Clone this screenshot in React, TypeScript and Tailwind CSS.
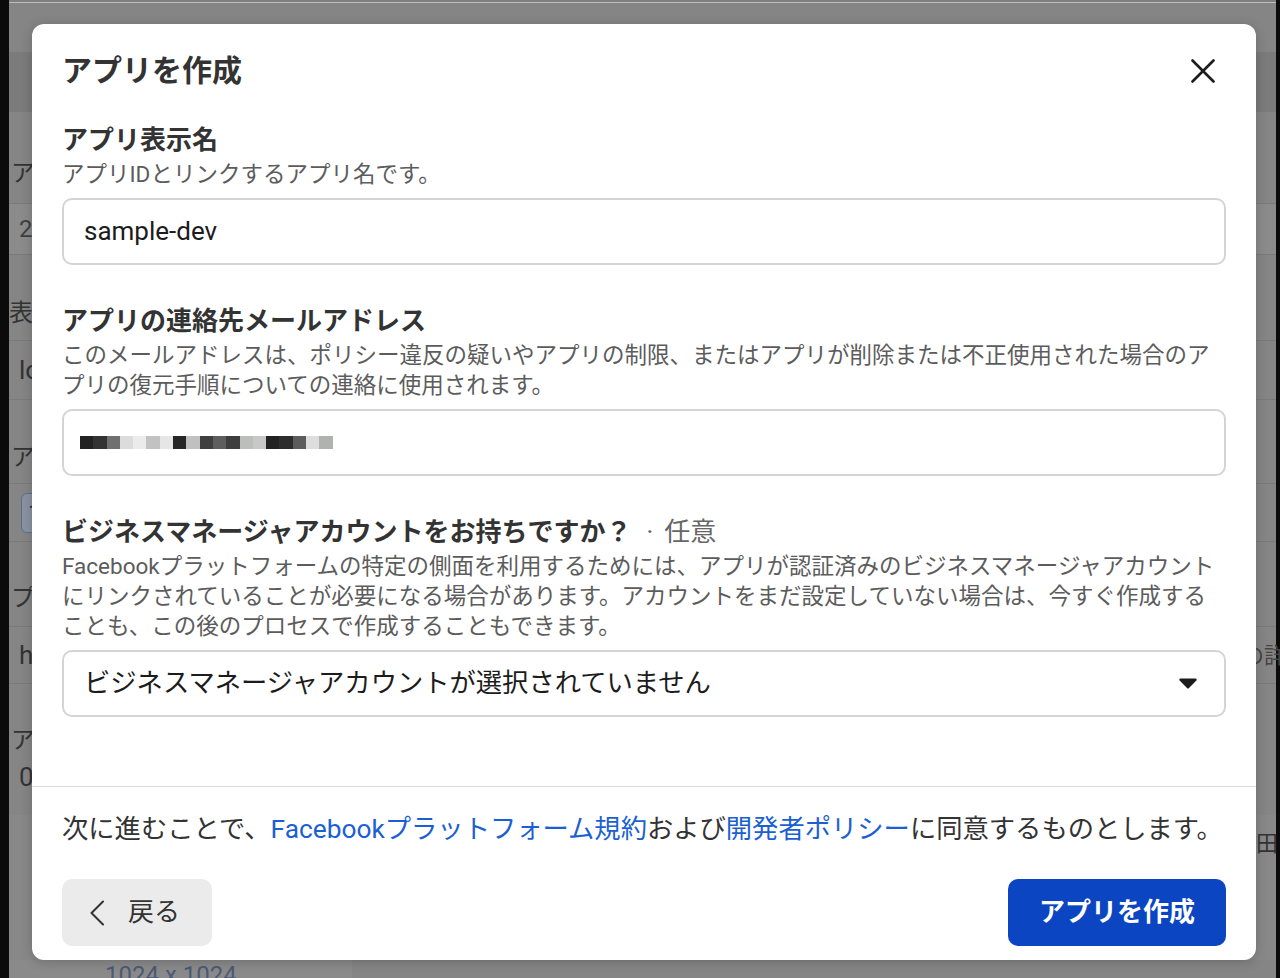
import type { ReactNode } from 'react';

const emailBlocks = [
  'bg-[#222222]',
  'bg-[#333333]',
  'bg-[#707070]',
  'bg-[#dcdcdc]',
  'bg-[#ebebeb]',
  'bg-[#c2c2c2]',
  'bg-[#e6e6e6]',
  'bg-[#262626]',
  'bg-[#c0c0c0]',
  'bg-[#3f3f3f]',
  'bg-[#5e5e5e]',
  'bg-[#3e3e3e]',
  'bg-[#bcbebc]',
  'bg-[#c8c8c8]',
  'bg-[#222222]',
  'bg-[#2d2d2d]',
  'bg-[#5c5c5c]',
  'bg-[#dddddd]',
  'bg-[#b0b2b0]',
];

interface SectionProps {
  title: ReactNode;
  description: ReactNode;
  children: ReactNode;
  className?: string;
}

function Section({ title, description, children, className }: SectionProps) {
  return (
    <div className={className}>
      <div className="text-[26px] font-bold leading-[34px] text-[#333333]">{title}</div>
      <p className="mt-[2px] text-[22.5px] leading-[30px] text-[#5c5c5c]">{description}</p>
      <div className="mt-[9px]">{children}</div>
    </div>
  );
}

function BackgroundPage() {
  return (
    <div className="ml-[9px] flex h-full w-[1267px] flex-col bg-[#858585] text-[24px] text-[#333333]">
      <div className="h-[2px] bg-[#7f7f7f]" />
      <div className="h-[1px] bg-[#bdbdbd]" />
      <div className="h-[49px]" />
      <div className="h-[60px] bg-[#7b7b7b]" />
      <div className="h-[30px]" />
      <div className="flex h-[61px] items-center pl-[2px]">アプリID</div>
      <div className="flex h-[52px] items-center border-y border-[#7a7a7a] bg-[#8b8b8b] pl-[10px] text-[#3f3f3f]">
        2
      </div>
      <div className="h-[30px]" />
      <div className="flex h-[55px] items-center pl-[0px]">表示名</div>
      <div className="flex h-[60px] items-center border-y border-[#7a7a7a] pl-[10px] text-[26px]">
        logo
      </div>
      <div className="h-[30px]" />
      <div className="flex h-[54px] items-center justify-between border-b border-[#7a7a7a] pl-[2px]">
        アプリ
      </div>
      <div className="flex h-[58px] items-center border-b border-[#7a7a7a] pl-[12px]">
        <div className="flex h-[40px] w-[40px] items-center rounded-[6px] border border-[#5c6f8f] bg-[#8a93a2] pl-[6px]">
          1
        </div>
      </div>
      <div className="h-[28px]" />
      <div className="flex h-[57px] items-center border-b border-[#7a7a7a] pl-[2px]">プライバシー</div>
      <div className="flex h-[57px] items-center justify-between border-b border-[#7a7a7a] pl-[10px] text-[26px]">
        <span>https</span>
        <span className="mr-[-32px] text-[22px] text-[#444444]">の詳細</span>
      </div>
      <div className="h-[32px]" />
      <div className="flex h-[48px] items-center pl-[2px]">アプリ</div>
      <div className="flex h-[26px] items-center pl-[10px] text-[26px]">0</div>
      <div className="h-[25px]" />
      <div className="flex h-[145px] items-start justify-end bg-[#888888] pt-[12px]">
        <span className="mr-[-24px] text-[22px]">田中</span>
      </div>
      <div className="flex h-[18px] w-[343px] items-start bg-[#8a8a8a] pl-[96px] leading-[30px] text-[#4d5a75]">
        1024 x 1024
      </div>
    </div>
  );
}

export default function App() {
  return (
    <div className="relative h-[978px] w-[1280px] overflow-hidden bg-[#0b0b0b] font-['Roboto','Noto_Sans_CJK_JP',sans-serif]">
      <BackgroundPage />

      <div className="absolute left-[32px] top-[24px] flex h-[936px] w-[1224px] flex-col rounded-[12px] bg-white shadow-[0_2px_12px_rgba(0,0,0,0.2)]">
        <div className="flex-1 px-[30px] pt-[29px]">
          <div className="flex h-[36px] items-center justify-between">
            <h1 className="text-[30px] font-bold leading-[36px] text-[#333333]">アプリを作成</h1>
            <svg
              width="24"
              height="24"
              viewBox="0 0 24 24"
              className="mr-[11px]"
              fill="none"
              stroke="#1c1c1c"
              strokeWidth="2.6"
              strokeLinecap="round"
            >
              <path d="M1.5 1.5 22.5 22.5M22.5 1.5 1.5 22.5" />
            </svg>
          </div>

          <Section
            className="mt-[34px]"
            title="アプリ表示名"
            description="アプリIDとリンクするアプリ名です。"
          >
            <div className="flex h-[67px] items-center rounded-[10px] border-2 border-[#d4d4d4] px-[20px] text-[26px] text-[#1c1c1c]">
              sample-dev
            </div>
          </Section>

          <Section
            className="mt-[39px]"
            title="アプリの連絡先メールアドレス"
            description="このメールアドレスは、ポリシー違反の疑いやアプリの制限、またはアプリが削除または不正使用された場合のアプリの復元手順についての連絡に使用されます。"
          >
            <div className="flex h-[67px] items-center rounded-[10px] border-2 border-[#d4d4d4] px-[16px]">
              <div className="flex">
                {emailBlocks.map((c, i) => (
                  <div key={i} className={`h-[13px] w-[13.3px] ${c}`} />
                ))}
              </div>
            </div>
          </Section>

          <Section
            className="mt-[39px]"
            title={
              <>
                ビジネスマネージャアカウントをお持ちですか？
                <span className="ml-[15px] font-normal text-[#666666]">·</span>
                <span className="ml-[11px] font-normal text-[#666666]">任意</span>
              </>
            }
            description="Facebookプラットフォームの特定の側面を利用するためには、アプリが認証済みのビジネスマネージャアカウントにリンクされていることが必要になる場合があります。アカウントをまだ設定していない場合は、今すぐ作成することも、この後のプロセスで作成することもできます。"
          >
            <div className="flex h-[67px] items-center justify-between rounded-[10px] border-2 border-[#d4d4d4] pl-[20px] pr-[27px] text-[26.3px] text-[#1c1c1c]">
              <span>ビジネスマネージャアカウントが選択されていません</span>
              <svg width="18" height="11" viewBox="0 0 18 11" fill="#1c1c1c">
                <path d="M1.5 0.5h15a1.2 1.2 0 0 1 .9 2L10 10a1.4 1.4 0 0 1-2 0L0.6 2.5a1.2 1.2 0 0 1 .9-2z" />
              </svg>
            </div>
          </Section>
        </div>

        <div className="border-t border-[#dcdcdc] px-[30px] pb-[14px] pt-[24px]">
          <p className="whitespace-nowrap text-[26.3px] leading-[36px] text-[#333333]">
            次に進むことで、<span className="text-[#1b5fd3]">Facebookプラットフォーム規約</span>および
            <span className="text-[#1b5fd3]">開発者ポリシー</span>に同意するものとします。
          </p>
          <div className="mt-[32px] flex items-center justify-between">
            <button className="flex h-[67px] w-[150px] items-center rounded-[10px] bg-[#ebebeb] pl-[28px] text-[26px] text-[#333333]">
              <svg
                width="14"
                height="26"
                viewBox="0 0 14 26"
                fill="none"
                stroke="#333333"
                strokeWidth="2"
                strokeLinecap="round"
                strokeLinejoin="round"
              >
                <path d="M13 1.5 1.5 13 13 24.5" />
              </svg>
              <span className="ml-[24px]">戻る</span>
            </button>
            <button className="flex h-[67px] w-[218px] items-center justify-center rounded-[10px] bg-[#0b45c2] text-[26px] font-bold text-white">
              アプリを作成
            </button>
          </div>
        </div>
      </div>
    </div>
  );
}
